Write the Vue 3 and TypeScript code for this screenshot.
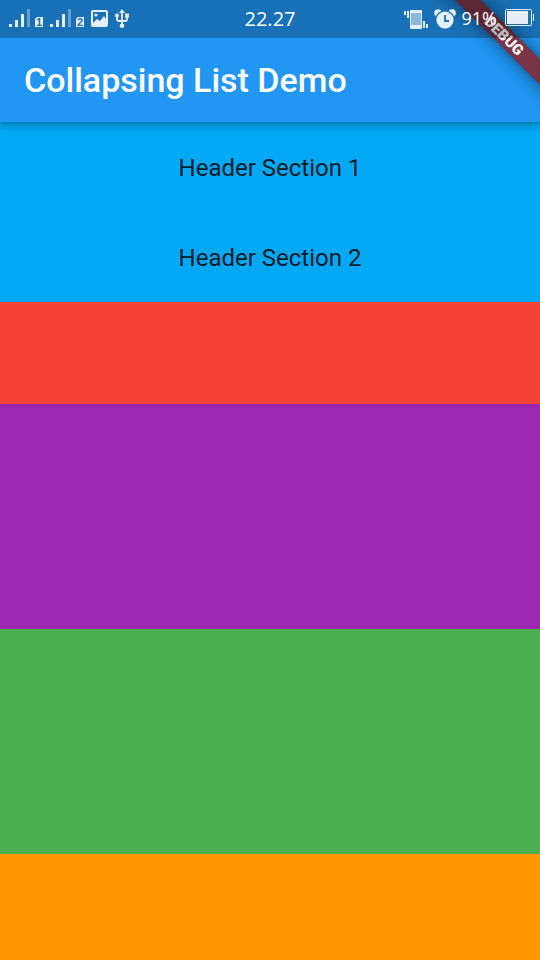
<script setup lang="ts">
interface Tile {
  name: string
}

const title = 'Collapsing List Demo'
const headers: string[] = ['Header Section 1', 'Header Section 2']
const tiles: Tile[] = [
  { name: 'red' },
  { name: 'purple' },
  { name: 'green' },
  { name: 'orange' },
]
const sims: string[] = ['1', '2']
</script>

<template>
  <div class="screen">
    <header class="app-bar">
      <h1 class="title">{{ title }}</h1>
    </header>

    <main class="list">
      <section class="pinned">
        <div v-for="text in headers" :key="text" class="pinned-row">{{ text }}</div>
      </section>
      <div v-for="tile in tiles" :key="tile.name" class="tile" :class="tile.name"></div>
    </main>

    <div class="corner">
      <div class="banner">DEBUG</div>
    </div>

    <div class="status">
      <div class="side">
        <svg v-for="sim in sims" :key="sim" class="signal" width="35" height="20" viewBox="0 0 35 20">
          <path d="M0 16h3v3H0zM6 12h3v7H6zM12 6h3v13h-3z" fill="#e6eff8" />
          <path d="M18 1h3v18h-3z" fill="#649fd0" />
          <path d="M28 9h6v10h-8v-8z" fill="#e6eff8" />
          <text x="30" y="18" text-anchor="middle" class="sim-number">{{ sim }}</text>
        </svg>
        <svg class="picture" width="17" height="17" viewBox="0 0 17 17">
          <path
            fill="#e6eff8"
            fill-rule="evenodd"
            d="M2 0h13q2 0 2 2v13q0 2-2 2H2q-2 0-2-2V2Q0 0 2 0zM2 2v11l4-4 3 2 4-5 2 3V2z"
          />
          <circle cx="5" cy="5" r="1.6" fill="#e6eff8" />
        </svg>
        <svg class="usb" width="16" height="19" viewBox="0 0 14 19">
          <g fill="none" stroke="#e6eff8" stroke-width="1.8">
            <path d="M7 3v14M2 7v3q0 2 2 2h6q2 0 2-2V7" />
          </g>
          <g fill="#e6eff8">
            <path d="M7 0l3 4H4z" />
            <circle cx="2" cy="6.5" r="2" />
            <path d="M10 4.5h4v4h-4z" />
            <circle cx="7" cy="16.7" r="2.3" />
          </g>
        </svg>
      </div>

      <time class="clock">22.27</time>

      <div class="side end">
        <svg width="24" height="20" viewBox="0 0 24 20">
          <path d="M0 2h2v4H0zM3 2h2v7H3zM19 12h2v7h-2zM22 15h2v4h-2z" fill="#e6eff8" />
          <rect x="6" y="1" width="12" height="19" rx="1" fill="#e6eff8" />
          <rect x="7" y="4" width="10" height="12" fill="#8bb9de" />
        </svg>
        <svg class="alarm" width="22" height="20" viewBox="0 0 22 20">
          <circle cx="4" cy="4" r="3.8" fill="#e6eff8" />
          <circle cx="18" cy="4" r="3.8" fill="#e6eff8" />
          <circle cx="11" cy="11" r="9.8" fill="#1b70b5" />
          <circle cx="11" cy="11" r="8.6" fill="#e6eff8" />
          <path d="M11 6v6h4" fill="none" stroke="#1b70b5" stroke-width="1.8" />
        </svg>
        <span class="percent">91%</span>
        <svg class="battery" width="29" height="18" viewBox="0 0 29 18">
          <rect x="0.5" y="0.5" width="26" height="16" rx="1" fill="none" stroke="#e6eff8" />
          <path d="M2 2h21v13H2z" fill="#e6eff8" />
          <path d="M28 5h1v7h-1z" fill="#e6eff8" />
        </svg>
      </div>
    </div>
  </div>
</template>

<style>
body {
  margin: 0;
}
</style>

<style scoped>
.screen {
  position: relative;
  display: flex;
  flex-direction: column;
  height: 100vh;
  overflow: hidden;
  font-family: Roboto, sans-serif;
}

.app-bar {
  position: relative;
  z-index: 1;
  flex: none;
  padding: 38px 24px 0;
  background: #2196f3;
  box-shadow:
    0 2px 6px rgba(0, 0, 0, 0.2),
    0 5px 8px rgba(0, 0, 0, 0.12);
}

.title {
  margin: 0;
  color: #fff;
  font-size: 34px;
  font-weight: 500;
  line-height: 84px;
  white-space: nowrap;
}

.list {
  display: flex;
  flex: 1;
  flex-direction: column;
  min-height: 0;
}

.pinned {
  flex: none;
  background: #03a9f4;
}

.pinned-row {
  padding-top: 2px;
  color: rgba(0, 0, 0, 0.87);
  font-size: 24px;
  line-height: 88px;
  text-align: center;
}

.tile {
  flex: none;
  height: 225px;
}

.red {
  height: 102px;
  background: #f44336;
}

.purple {
  background: #9c27b0;
}

.green {
  background: #4caf50;
}

.orange {
  flex: 1 0 106px;
  background: #ff9800;
}

.corner {
  position: absolute;
  top: 0;
  right: 0;
  z-index: 2;
  width: 140px;
  height: 140px;
  overflow: hidden;
  pointer-events: none;
}

.banner {
  position: absolute;
  top: 27px;
  right: -54px;
  width: 180px;
  background:
    linear-gradient(rgba(183, 28, 28, 0.63), rgba(183, 28, 28, 0.63)),
    rgba(0, 0, 0, 0.4);
  box-shadow: 0 0 18px rgba(0, 0, 0, 0.5);
  color: #fff;
  font-size: 15px;
  font-weight: 900;
  line-height: 18px;
  text-align: center;
  transform: rotate(45deg);
}

.status {
  position: absolute;
  top: 0;
  right: 0;
  left: 0;
  z-index: 3;
  display: grid;
  grid-template-columns: 1fr auto 1fr;
  height: 38px;
  background: rgba(0, 0, 0, 0.25);
  color: #fff;
  font-family: 'Open Sans', sans-serif;
}

.side {
  display: flex;
  align-items: flex-start;
  gap: 6px;
  padding: 8px 9px 0;
}

.end {
  justify-content: flex-end;
  padding: 9px 6px 0;
}

.sim-number {
  fill: #1b70b5;
  font-family: 'Liberation Sans', sans-serif;
  font-size: 11px;
  font-weight: 700;
}

.picture {
  margin-top: 2px;
}

.usb {
  margin-top: 1px;
}

.clock {
  font-size: 20px;
  line-height: 38px;
}

.percent {
  padding-right: 2px;
  font-size: 18px;
  line-height: 18px;
}
</style>
